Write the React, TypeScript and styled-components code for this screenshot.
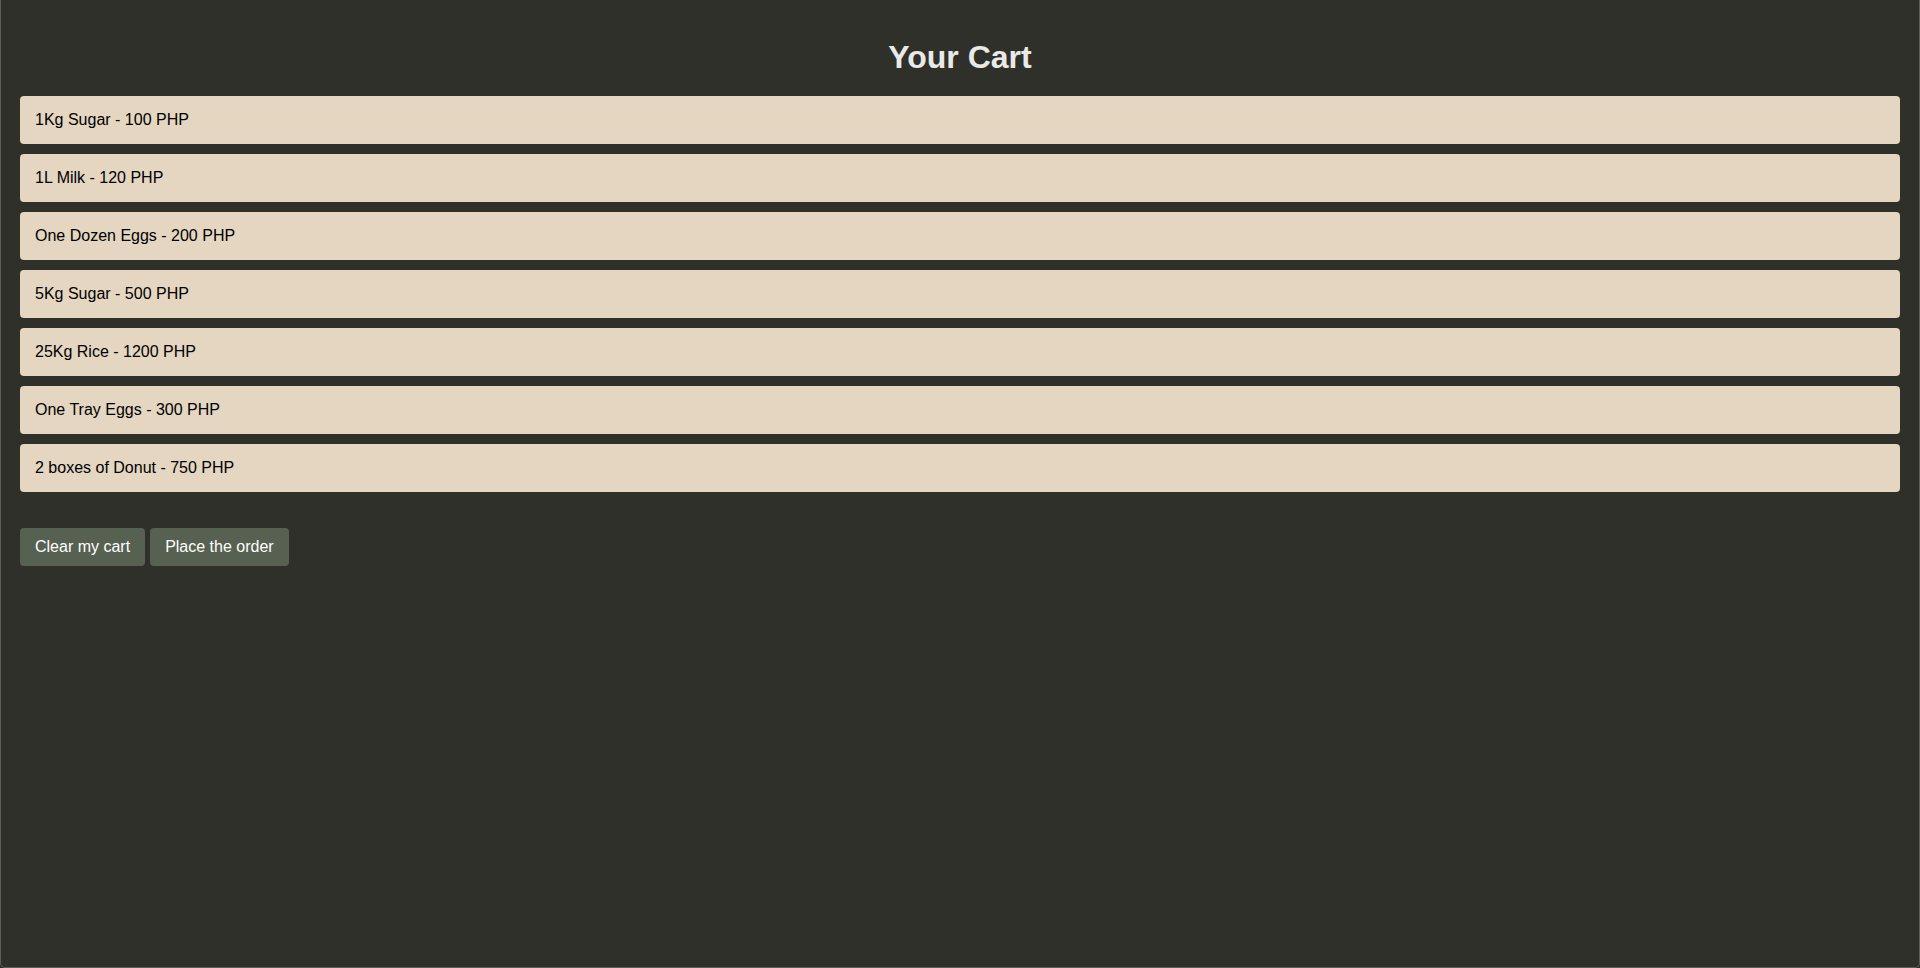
import React from "react";
import styled, { createGlobalStyle } from "styled-components";

const GlobalStyle = createGlobalStyle`
  html, body {
    margin: 0;
    padding: 0;
    background: #2f302a;
  }
  body {
    font-family: "Liberation Sans", Arial, sans-serif;
  }
`;

const Frame = styled.div`
  box-sizing: border-box;
  height: 968px;
  padding: 20px 19px;
  border: 1px solid #5d5d58;
  border-top: none;
  border-radius: 0 0 5px 5px;
  background: #2f302a;
  overflow: hidden;
`;

const Title = styled.h1`
  margin: 19px 0 20px;
  font-size: 32px;
  line-height: 37px;
  font-weight: 700;
  text-align: center;
  color: #e9e9e7;
`;

const List = styled.ul`
  list-style: none;
  margin: 0;
  padding: 0;
  display: flex;
  flex-direction: column;
  gap: 10px;
`;

const Item = styled.li`
  display: flex;
  align-items: center;
  height: 48px;
  padding: 0 15px;
  border-radius: 4px;
  background: #e4d6c0;
  color: #000;
  font-size: 16px;
`;

const Actions = styled.div`
  display: flex;
  gap: 5px;
  margin-top: 36px;
`;

const Button = styled.button`
  height: 38px;
  padding: 0 15px;
  border: none;
  border-radius: 4px;
  background: #576152;
  color: #ffffff;
  font-family: "Liberation Sans", Arial, sans-serif;
  font-size: 16px;
  cursor: pointer;
`;

const items = [
  "1Kg Sugar - 100 PHP",
  "1L Milk - 120 PHP",
  "One Dozen Eggs - 200 PHP",
  "5Kg Sugar - 500 PHP",
  "25Kg Rice - 1200 PHP",
  "One Tray Eggs - 300 PHP",
  "2 boxes of Donut - 750 PHP",
];

export default function App() {
  return (
    <>
      <GlobalStyle />
      <Frame>
        <Title>Your Cart</Title>
        <List>
          {items.map((t) => (
            <Item key={t}>{t}</Item>
          ))}
        </List>
        <Actions>
          <Button>Clear my cart</Button>
          <Button>Place the order</Button>
        </Actions>
      </Frame>
    </>
  );
}
